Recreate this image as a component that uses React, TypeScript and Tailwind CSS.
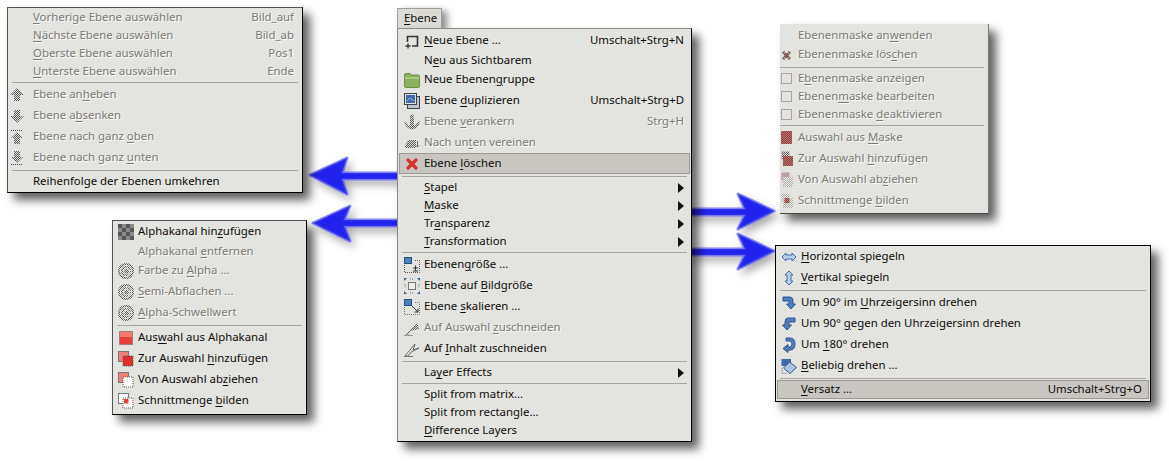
import React from 'react';
import clsx from 'clsx';

type IconName = keyof typeof icons;

interface Item {
  label?: string;
  h?: string;
  icon?: IconName;
  shortcut?: string;
  off?: boolean;
  sub?: boolean;
  hover?: boolean;
  sep?: boolean;
}

const row18 = 'h-[18px] pt-[2px]';

const Ic = ({ children }: { children: React.ReactNode }) => (
  <svg width="16" height="16" viewBox="0 0 16 16" className="block">
    {children}
  </svg>
);

const icons = {
  up: <Ic><path d="M8 1 L15 8 L11 8 L11 14 L5 14 L5 8 L1 8 Z" fill="url(#dith)" /></Ic>,
  down: <Ic><path d="M8 15 L15 8 L11 8 L11 2 L5 2 L5 8 L1 8 Z" fill="url(#dith)" /></Ic>,
  top: <Ic><path d="M2 1.5 H14" stroke="#444" strokeDasharray="1 1" /><path d="M8 3 L14 9 L11 9 L11 15 L5 15 L5 9 L2 9 Z" fill="url(#dith)" /></Ic>,
  bottom: <Ic><path d="M2 14.5 H14" stroke="#444" strokeDasharray="1 1" /><path d="M8 13 L14 7 L11 7 L11 1 L5 1 L5 7 L2 7 Z" fill="url(#dith)" /></Ic>,
  checker: <Ic><rect width="16" height="16" fill="#8a8a8a" /><path d="M0 0h4v4H0zM8 0h4v4H8zM4 4h4v4H4zM12 4h4v4h-4zM0 8h4v4H0zM8 8h4v4H8zM4 12h4v4H4zM12 12h4v4h-4z" fill="#555" /></Ic>,
  swirl: <Ic><circle cx="8" cy="8" r="8" fill="url(#dith)" /><circle cx="8" cy="8" r="5.5" fill="none" stroke="#eee" /><circle cx="8.5" cy="8" r="3" fill="none" stroke="#eee" /></Ic>,
  selAlpha: <Ic><rect x="1.5" y="1.5" width="13" height="13" fill="#e8403a" stroke="#666" strokeDasharray="1 1" /><rect x="2" y="2" width="12" height="5" fill="#f47a72" /></Ic>,
  selAdd: <Ic><rect x="0.5" y="0.5" width="10" height="10" fill="#f08078" stroke="#777" /><rect x="5" y="5" width="10" height="10" fill="#e02f2a" stroke="#555" strokeDasharray="1 1" /></Ic>,
  selSub: <Ic><rect x="0.5" y="0.5" width="10" height="10" fill="#f08078" stroke="#777" /><rect x="5" y="5" width="10" height="10" fill="#fff" stroke="#555" strokeDasharray="1 1" /></Ic>,
  selInt: <Ic><rect x="0.5" y="0.5" width="10" height="10" fill="#fff" stroke="#777" /><rect x="5" y="5" width="10" height="10" fill="#fff" stroke="#555" strokeDasharray="1 1" /><rect x="6" y="6" width="4.5" height="4.5" fill="#e8403a" /></Ic>,
  newLayer: <Ic><path d="M3.5 9 V3.5 H13.5 V13 H8" fill="none" stroke="#333" strokeWidth="1.6" /><path d="M4 10.5 V15.5 M1.5 13 H6.5" stroke="#333" strokeWidth="1.3" /></Ic>,
  folder: <Ic><path d="M0.5 3 Q0.5 1.5 2 1.5 H6 L7.5 3 H14 Q15.5 3 15.5 4.5 V14 Q15.5 15.5 14 15.5 H2 Q0.5 15.5 0.5 14 Z" fill="#8ab060" stroke="#6d8f48" /><rect x="1" y="5" width="14" height="2" fill="#a8cc7e" /></Ic>,
  dup: <Ic><rect x="3.5" y="3.5" width="12" height="12" fill="#b9c4d4" stroke="#444" /><rect x="0.5" y="0.5" width="12" height="11" fill="#dfe3e8" stroke="#444" /><rect x="2" y="2" width="9" height="8" fill="#3f6ca8" /><path d="M3 8 L6 5 L10 8" stroke="#9fbbdd" fill="none" /></Ic>,
  anchor: <Ic><circle cx="8" cy="2.5" r="2" fill="url(#dith)" /><rect x="6" y="4" width="4" height="10" fill="url(#dith)" /><path d="M0 7 Q1 14 8 15.5 Q15 14 16 7 L13 9 Q12 12 8 12 Q4 12 3 9 Z" fill="url(#dith)" /></Ic>,
  merge: <Ic><path d="M1 11 L4 5 H12 V13 H1 Z" fill="url(#dith)" /><path d="M13.5 6 V12 M12 10.5 L13.5 12 L15 10.5" stroke="#666" fill="none" /></Ic>,
  del: <Ic><path d="M4 4 L12 12 M12 4 L4 12" stroke="#d8332b" strokeWidth="3.2" strokeLinecap="round" /></Ic>,
  resize: <Ic><rect x="0.5" y="0.5" width="7" height="6" fill="#4f7fbd" stroke="#2a4c80" /><path d="M0.5 8 V15.5 H15.5 V3.5 H10" fill="none" stroke="#555" strokeDasharray="1 1" /><path d="M9 11 H14 M11.5 8.5 V13.5 M9 14 H14" stroke="#333" /></Ic>,
  fit: <Ic><path d="M0 0 H3 L0 3 Z M16 0 V3 L13 0 Z M0 16 V13 L3 16 Z M16 16 H13 L16 13 Z" fill="#2f5f9f" /><rect x="4.5" y="4.5" width="7" height="7" fill="#eee" stroke="#777" /><path d="M1 6 V10 M15 6 V10 M6 1 H10 M6 15 H10" stroke="#777" strokeDasharray="1 1" /></Ic>,
  scale: <Ic><rect x="0.5" y="0.5" width="7" height="6" fill="#4f7fbd" stroke="#2a4c80" /><path d="M0.5 8 V15.5 H15.5 V3.5 H10" fill="none" stroke="#777" strokeDasharray="1 1" /><path d="M8 7 L14 13 M14 9.5 V13 H10.5" stroke="#333" fill="none" /></Ic>,
  cropOff: <Ic><path d="M1 15 L13 3 L15 9 L7 11 L4 15 Z" fill="url(#dith)" /><path d="M0 15.5 H9" stroke="#999" /></Ic>,
  crop: <Ic><path d="M1 15 L11 3 L9 9 L15 7 L7 11 L4 15 Z" stroke="#666" fill="#f4f4f2" /><path d="M0 15.5 H9" stroke="#777" /></Ic>,
  maskDel: <Ic><path d="M2 5 L9 12 M9 5 L2 12" stroke="#77504c" strokeWidth="3" strokeDasharray="1.5 .6" /></Ic>,
  check: <Ic><rect x="0.5" y="2.5" width="10" height="10" fill="none" stroke="#a8a69e" /></Ic>,
  mSel: <Ic><rect x="0" y="1" width="11" height="13" fill="url(#dithRed)" /></Ic>,
  mAdd: <Ic><rect x="0.5" y="0.5" width="8" height="8" fill="url(#dith)" /><rect x="2" y="5" width="10" height="10" fill="url(#dithRed)" /></Ic>,
  mSub: <Ic><rect x="0.5" y="0.5" width="8" height="8" fill="url(#dithRed)" opacity=".5" /><rect x="2" y="5" width="10" height="10" fill="url(#dithLight)" /></Ic>,
  mInt: <Ic><rect x="0.5" y="0.5" width="8" height="8" fill="url(#dithLight)" /><rect x="2" y="5" width="10" height="10" fill="url(#dithLight)" /><rect x="3.5" y="5" width="5" height="5" fill="url(#dithRed)" /></Ic>,
  flipH: <Ic><path d="M1 8 L5 4 V6 H11 V4 L15 8 L11 12 V10 H5 V12 Z" fill="#b9cfe8" stroke="#3f6ca8" /></Ic>,
  flipV: <Ic><path d="M8 1 L12 5 H10 V11 H12 L8 15 L4 11 H6 V5 H4 Z" fill="#b9cfe8" stroke="#3f6ca8" /></Ic>,
  cw: <Ic><path d="M2 2 H9 Q12 2 12 6 V9 H14.5 L10 14 L5.5 9 H8 V6 H2 Z" fill="#4f7fbd" stroke="#2f5590" /></Ic>,
  ccw: <Ic><path d="M14 2 H7 Q4 2 4 6 V9 H1.5 L6 14 L10.5 9 H8 V6 H14 Z" fill="#4f7fbd" stroke="#2f5590" /></Ic>,
  half: <Ic><path d="M5 1 H9 Q14 1 14 7 Q14 13 9 13 H7 V15.5 L2 11.5 L7 7.5 V10 H9 Q11 10 11 7 Q11 4 9 4 H5 Z" fill="#4f7fbd" stroke="#2f5590" /></Ic>,
  rotate: <Ic><path d="M0.5 1 H10 V8 H0.5 Z" fill="#3f6ca8" /><path d="M8.5 4 L15.5 9.5 L9 15.5 L2.5 10 Z" fill="#a9c4e4" stroke="#2f5590" /><path d="M1 10 V15.5 H6" stroke="#777" fill="none" strokeDasharray="1 1" /></Ic>,
};

const leftTop: Item[] = [
  { label: '&Vorherige Ebene auswählen', shortcut: 'Bild_auf', off: true, h: row18 },
  { label: '&Nächste Ebene auswählen', shortcut: 'Bild_ab', off: true, h: row18 },
  { label: '&Oberste Ebene auswählen', shortcut: 'Pos1', off: true, h: row18 },
  { label: '&Unterste Ebene auswählen', shortcut: 'Ende', off: true, h: row18 },
  { sep: true },
  { label: 'Ebene an&heben', icon: 'up', off: true },
  { label: 'Ebene a&bsenken', icon: 'down', off: true },
  { label: 'Ebene nach ganz &oben', icon: 'top', off: true },
  { label: 'Ebene nach ganz &unten', icon: 'bottom', off: true },
  { sep: true },
  { label: 'Reihenfolge der Ebenen umkehren', h: row18 },
];

const alpha: Item[] = [
  { label: 'Alphakanal hin&zufügen', icon: 'checker' },
  { label: 'Alphakanal &entfernen', off: true, h: row18 },
  { label: 'Farbe zu &Alpha …', icon: 'swirl', off: true },
  { label: '&Semi-Abflachen …', icon: 'swirl', off: true },
  { label: '&Alpha-Schwellwert', icon: 'swirl', off: true },
  { sep: true },
  { label: 'Aus&wahl aus Alphakanal', icon: 'selAlpha' },
  { label: 'Zur Auswahl &hinzufügen', icon: 'selAdd' },
  { label: 'Von Auswahl ab&ziehen', icon: 'selSub' },
  { label: 'Schnittmenge &bilden', icon: 'selInt' },
];

const main: Item[] = [
  { label: '&Neue Ebene …', icon: 'newLayer', shortcut: 'Umschalt+Strg+N' },
  { label: 'N&eu aus Sichtbarem', h: row18 },
  { label: 'Neue Ebenen&gruppe', icon: 'folder' },
  { label: 'Ebene &duplizieren', icon: 'dup', shortcut: 'Umschalt+Strg+D' },
  { label: 'Ebene &verankern', icon: 'anchor', shortcut: 'Strg+H', off: true },
  { label: 'Nach un&ten vereinen', icon: 'merge', off: true },
  { label: 'Ebene &löschen', icon: 'del', hover: true },
  { sep: true },
  { label: '&Stapel', sub: true, h: row18 },
  { label: '&Maske', sub: true, h: row18 },
  { label: 'Tr&ansparenz', sub: true, h: row18 },
  { label: '&Transformation', sub: true, h: row18 },
  { sep: true },
  { label: 'Ebenen&größe …', icon: 'resize' },
  { label: 'Ebene auf &Bildgröße', icon: 'fit' },
  { label: 'Ebene &skalieren …', icon: 'scale' },
  { label: 'Auf Auswahl &zuschneiden', icon: 'cropOff', off: true },
  { label: 'Auf &Inhalt zuschneiden', icon: 'crop' },
  { sep: true },
  { label: 'La&yer Effects', sub: true, h: row18 },
  { sep: true },
  { label: 'Split from matrix...', h: row18 },
  { label: 'Split from rectangle...', h: row18 },
  { label: '&Difference Layers', h: row18 },
];

const mask: Item[] = [
  { label: 'Ebenenmaske an&wenden', off: true, h: 'h-[19px] pt-[2px]' },
  { label: 'Ebenenmaske lös&chen', icon: 'maskDel', off: true },
  { sep: true },
  { label: 'E&benenmaske anzeigen', icon: 'check', off: true, h: row18 },
  { label: 'Ebenen&maske bearbeiten', icon: 'check', off: true, h: row18 },
  { label: 'Ebenenmaske &deaktivieren', icon: 'check', off: true, h: row18 },
  { sep: true },
  { label: 'Auswahl aus &Maske', icon: 'mSel', off: true },
  { label: 'Zur Auswahl &hinzufügen', icon: 'mAdd', off: true },
  { label: 'Von Auswahl ab&ziehen', icon: 'mSub', off: true },
  { label: 'Schnittmenge &bilden', icon: 'mInt', off: true },
];

const transform: Item[] = [
  { label: '&Horizontal spiegeln', icon: 'flipH' },
  { label: '&Vertikal spiegeln', icon: 'flipV' },
  { sep: true },
  { label: 'Um 90° im &Uhrzeigersinn drehen', icon: 'cw' },
  { label: 'Um 90° &gegen den Uhrzeigersinn drehen', icon: 'ccw' },
  { label: 'Um &180° drehen', icon: 'half' },
  { label: '&Beliebig drehen …', icon: 'rotate' },
  { sep: true },
  { label: '&Versatz …', shortcut: 'Umschalt+Strg+O', hover: true, h: 'h-[19px]' },
];

// "&" marks the letter that gets the keyboard underline
const Mnemonic = ({ text }: { text: string }) => {
  const i = text.indexOf('&');
  if (i < 0) return <>{text}</>;
  return (
    <>
      {text.slice(0, i)}
      <span className="underline decoration-1 underline-offset-2">{text[i + 1]}</span>
      {text.slice(i + 2)}
    </>
  );
};

interface MenuProps {
  items: Item[];
  box: string;
  col: string;
  pr: string;
  sepCls: string;
}

const Menu = ({ items, box, col, pr, sepCls }: MenuProps) => (
  <div className={clsx('absolute bg-[#e3e3df] shadow-[7px_7px_9px_rgba(0,0,0,0.62)]', box)}>
    {items.map((item, i) =>
      item.sep ? (
        <div key={i} className={clsx('h-1 flex items-center', sepCls)}>
          <div className="h-px w-full bg-[#a8a69e]" />
        </div>
      ) : (
        <div
          key={i}
          className={clsx(
            'flex items-center mx-px',
            item.h ?? 'h-[21px]',
            item.hover && 'bg-[#c9c6c1] outline outline-1 -outline-offset-1 outline-[#9c9a93]',
            item.off ? 'text-[#7a7a76] [text-shadow:1px_1px_0_#fbfbf9]' : 'text-[#0c0c0a]',
          )}
        >
          <span className={clsx('shrink-0', col)}>{item.icon ? icons[item.icon] : null}</span>
          <span className="whitespace-nowrap -mt-[2px]">
            <Mnemonic text={item.label ?? ''} />
          </span>
          {item.shortcut && <span className={clsx('ml-auto whitespace-nowrap -mt-[2px]', pr)}>{item.shortcut}</span>}
          {item.sub && (
            <span className={clsx('ml-auto', pr)}>
              <svg width="6" height="10" viewBox="0 0 6 10" className="block">
                <path d="M0 0 L6 5 L0 10 Z" fill="#111" />
              </svg>
            </span>
          )}
        </div>
      ),
    )}
  </div>
);

const Arrow = ({ d }: { d: string }) => (
  <path d={d} fill="#2020ee" stroke="#3a3af0" strokeOpacity="0.6" strokeWidth="3" strokeLinejoin="round" />
);

export default function App() {
  return (
    <div className="relative w-[1169px] h-[461px] overflow-hidden bg-white text-[11.4px] leading-none font-['Noto_Sans','Open_Sans',sans-serif]">
      <svg width="0" height="0" className="absolute">
        <defs>
          <pattern id="dith" width="2" height="2" patternUnits="userSpaceOnUse">
            <rect width="2" height="2" fill="#e3e3df" />
            <rect width="1" height="1" fill="#555" />
            <rect x="1" y="1" width="1" height="1" fill="#555" />
          </pattern>
          <pattern id="dithRed" width="2" height="2" patternUnits="userSpaceOnUse">
            <rect width="2" height="2" fill="#c96a66" />
            <rect width="1" height="1" fill="#7a4a48" />
            <rect x="1" y="1" width="1" height="1" fill="#7a4a48" />
          </pattern>
          <pattern id="dithLight" width="2" height="2" patternUnits="userSpaceOnUse">
            <rect width="2" height="2" fill="#f2f2f0" />
            <rect width="1" height="1" fill="#a8a8a4" />
            <rect x="1" y="1" width="1" height="1" fill="#a8a8a4" />
          </pattern>
          <filter id="arrowShadow" x="-20%" y="-30%" width="140%" height="170%">
            <feDropShadow dx="4" dy="5" stdDeviation="4" floodColor="#000" floodOpacity="0.35" />
          </filter>
        </defs>
      </svg>

      {/* annotation arrows sit under the menus */}
      <svg width="1169" height="461" className="absolute left-0 top-0" filter="url(#arrowShadow)">
        <Arrow d="M310 175 L347 158 L342 173 H400 V179 H342 L347 194 Z" />
        <Arrow d="M313 223 L350 206 L344 220 H400 V226 H344 L350 241 Z" />
        <Arrow d="M774 211 L738 194 L745 209 H690 V215 H745 L738 229 Z" />
        <Arrow d="M774 251 L738 234 L745 249 H690 V255 H745 L738 269 Z" />
      </svg>

      <Menu
        items={leftTop}
        box="left-[7px] top-[7px] w-[296px] h-[186px] border border-[#555] border-r-black border-b-black"
        col="w-[24px]"
        pr="pr-[7px]"
        sepCls="px-[4px]"
      />
      <Menu
        items={alpha}
        box="left-[112px] top-[220px] w-[195px] h-[195px] border border-[#555] border-r-black border-b-black"
        col="w-[24px] pl-[4px]"
        pr="pr-[8px]"
        sepCls="px-[4px]"
      />

      <div className="absolute left-[397px] top-[8px] w-[45px] h-[21px] pl-[6px] flex items-center bg-[#dcdbd6] border border-[#a09e98] text-[#0c0c0a] shadow-[5px_3px_7px_rgba(0,0,0,0.45)]">
        <span className="-mt-[2px]">
          <Mnemonic text="&Ebene" />
        </span>
      </div>
      <Menu
        items={main}
        box="left-[397px] top-[28px] w-[295px] h-[414px] pt-px border border-[#8a8a86] border-r-black border-b-black"
        col="w-[25px] pl-[5px]"
        pr="pr-[6px]"
        sepCls="px-[4px]"
      />

      <Menu
        items={mask}
        box="left-[780px] top-[24px] w-[209px] h-[190px] pt-px border-r border-b border-r-[#777] border-b-[#444]"
        col="w-[17px]"
        pr="pr-[8px]"
        sepCls="pr-[4px]"
      />
      <Menu
        items={transform}
        box="left-[775px] top-[245px] w-[376px] h-[157px] border border-black"
        col="w-[24px] pl-[4px]"
        pr="pr-[7px]"
        sepCls="px-[4px]"
      />
    </div>
  );
}
